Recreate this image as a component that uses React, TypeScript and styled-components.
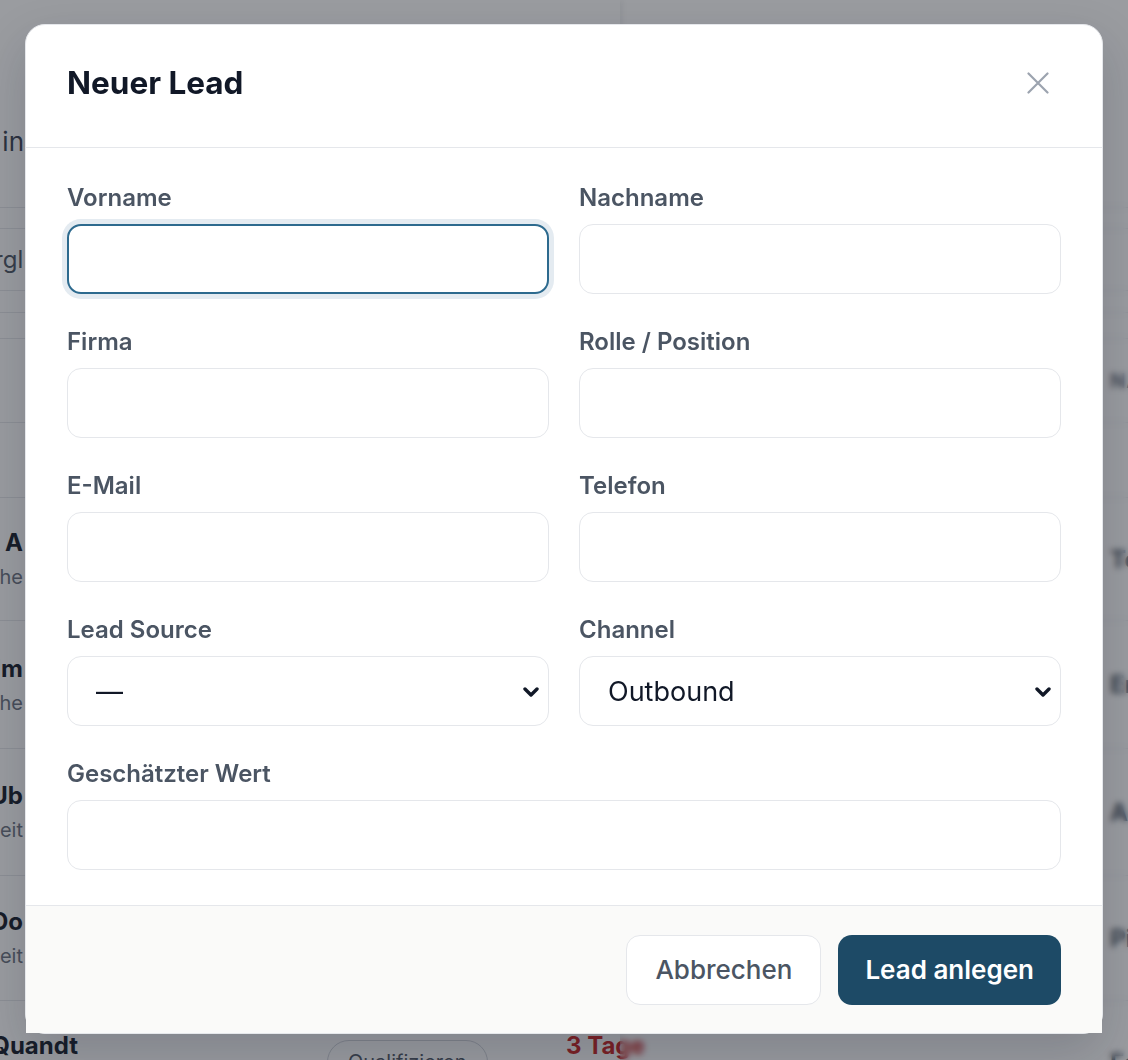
import React from "react";
import styled, { createGlobalStyle, css } from "styled-components";

const GlobalStyle = createGlobalStyle`
  * { box-sizing: border-box; }
  html, body { margin: 0; padding: 0; }
  body {
    font-family: Inter, "Noto Sans", "Liberation Sans", sans-serif;
    background: #ffffff;
    color: #111827;
    -webkit-font-smoothing: antialiased;
  }
  #root { height: 1060px; overflow: hidden; }
`;

/* ---------- page behind the dialog ---------- */

const Page = styled.div`
  height: 1060px;
  overflow: hidden;
  background: #ffffff;
`;

const Band = styled.div<{ $h: number; $top?: number }>`
  height: ${(p) => p.$h}px;
  padding-top: ${(p) => p.$top ?? 0}px;
  border-bottom: 1px solid #e5e7eb;
  display: grid;
  grid-template-columns: 78px 249px 239px 544px 1fr;
  align-items: center;
`;

// shows only the tail of a text that runs in from the left edge
const Clip = styled.div<{ $w: number; $hide?: number }>`
  width: ${(p) => p.$w}px;
  display: flex;
  flex-direction: column;
  align-items: flex-end;
  overflow: hidden;
  white-space: nowrap;
  gap: 6px;
  & > * {
    margin-right: -${(p) => p.$hide ?? 0}px;
  }
`;

const Stack = styled.div`
  display: flex;
  flex-direction: column;
  gap: 6px;
  white-space: nowrap;
`;

const PageTitle = styled.span`
  font-size: 26px;
  color: #374151;
`;

const FilterText = styled.span`
  font-size: 24px;
  color: #4b5563;
`;

const Name = styled.span`
  font-size: 24px;
  line-height: 30px;
  font-weight: 700;
  color: #111827;
`;

const Sub = styled.span`
  font-size: 20px;
  line-height: 26px;
  color: #6b7280;
`;

const HeadCell = styled.span`
  font-size: 20px;
  font-weight: 700;
  color: #6b7280;
  letter-spacing: 1px;
  white-space: nowrap;
`;

const StepCell = styled.span`
  font-size: 24px;
  font-weight: 700;
  color: #4b5563;
  white-space: nowrap;
`;

const Pill = styled.span`
  justify-self: start;
  height: 44px;
  padding: 0 20px;
  border: 1.5px solid #d1d5db;
  border-radius: 999px;
  font-size: 20px;
  color: #4b5563;
  display: flex;
  align-items: center;
`;

const Overdue = styled.span`
  font-size: 24px;
  line-height: 30px;
  font-weight: 700;
  color: #c81e1e;
`;

/* ---------- dim layer ---------- */

const Shades = styled.div`
  position: fixed;
  inset: 0;
  display: flex;
`;

const Shade = styled.div<{ $blur?: boolean }>`
  background: rgba(30, 35, 45, 0.45);
  flex: ${(p) => (p.$blur ? "1 1 auto" : "0 0 620px")};
  ${(p) =>
    p.$blur &&
    css`
      backdrop-filter: blur(3px);
    `}
`;

/* ---------- dialog ---------- */

const DialogLayer = styled.div`
  position: fixed;
  inset: 0;
  padding-bottom: 2px;
  display: flex;
  align-items: center;
  justify-content: center;
`;

const Dialog = styled.div`
  width: 1078px;
  height: 1010px;
  background: #ffffff;
  border: 1px solid #e5e7eb;
  border-radius: 20px;
  display: flex;
  flex-direction: column;
  box-shadow: 0 20px 50px rgba(15, 23, 42, 0.18);
`;

const Header = styled.div`
  height: 123px;
  flex: none;
  border-bottom: 1px solid #e5e7eb;
  padding: 0 42px 6px 41px;
  display: flex;
  align-items: center;
  justify-content: space-between;
`;

const Title = styled.h2`
  margin: 0;
  font-size: 31.5px;
  line-height: 40px;
  font-weight: 700;
  color: #111827;
`;

const CloseButton = styled.button`
  width: 44px;
  height: 44px;
  border: none;
  background: transparent;
  padding: 0;
  display: flex;
  align-items: center;
  justify-content: center;
  color: #9ca3af;
  cursor: pointer;
`;

const Body = styled.div`
  flex: 1 1 auto;
  padding: 36px 41px 0;
  display: grid;
  grid-template-columns: 1fr 1fr;
  column-gap: 30px;
  row-gap: 34px;
  align-content: start;
`;

const Field = styled.div<{ $wide?: boolean }>`
  display: flex;
  flex-direction: column;
  ${(p) =>
    p.$wide &&
    css`
      grid-column: 1 / -1;
    `}
`;

const Label = styled.label`
  font-size: 24px;
  line-height: 28px;
  font-weight: 600;
  color: #4b5563;
  margin-bottom: 12px;
`;

const controlBase = css<{ $focused?: boolean }>`
  width: 100%;
  height: 70px;
  border: 1.5px solid #e5e7eb;
  border-radius: 14px;
  background: #ffffff;
  padding: 0 28px;
  font-family: Inter, "Noto Sans", sans-serif;
  font-size: 27px;
  color: #111827;
  outline: none;
  ${(p) =>
    p.$focused &&
    css`
      border: 2px solid #2d6a8e;
      box-shadow: 0 0 0 5px #e4ebf1;
    `}
`;

const Input = styled.input<{ $focused?: boolean }>`
  ${controlBase}
`;

const SelectWrap = styled.div`
  position: relative;
`;

const Select = styled.select<{ $focused?: boolean }>`
  ${controlBase}
  appearance: none;
  -webkit-appearance: none;
`;

const Chevron = styled.svg`
  position: absolute;
  right: 10px;
  top: 31px;
  pointer-events: none;
`;

const Footer = styled.div`
  height: 128px;
  flex: none;
  border-top: 1px solid #e5e7eb;
  background: #fafaf9;
  padding: 0 41px;
  display: flex;
  align-items: center;
  justify-content: flex-end;
  gap: 17px;
`;

const Button = styled.button<{ $primary?: boolean }>`
  height: 70px;
  border-radius: 14px;
  font-family: Inter, "Noto Sans", sans-serif;
  font-size: 26px;
  cursor: pointer;
  ${(p) =>
    p.$primary
      ? css`
          padding: 0 27px;
          border: none;
          background: #1d4a66;
          color: #ffffff;
          font-weight: 600;
        `
      : css`
          padding: 0 28px;
          border: 1.5px solid #e5e7eb;
          background: #ffffff;
          color: #4b5563;
          font-weight: 500;
        `}
`;

const leads = [
  { name: "Benedikt A", sub: "Technische", step: "Telefonat", h: 123 },
  { name: "Wilhelm", sub: "Logistische", step: "Erstgespräch", h: 128 },
  { name: "Jakob Ub", sub: "Projektleit", step: "Angebot", h: 127 },
  { name: "Marie Do", sub: "Teamleit", step: "Pitch", h: 125 },
];

const ChevronDown = () => (
  <Chevron width="16" height="10" viewBox="0 0 16 10">
    <path
      d="M2 2 L8 8 L14 2"
      fill="none"
      stroke="#111827"
      strokeWidth="3.4"
      strokeLinecap="round"
      strokeLinejoin="round"
    />
  </Chevron>
);

export default function App() {
  return (
    <>
      <GlobalStyle />
      <Page>
        <Band $h={208} $top={76}>
          <Clip $w={24}>
            <PageTitle>Leads verwalten in</PageTitle>
          </Clip>
        </Band>
        <Band $h={21} />
        <Band $h={62}>
          <Clip $w={22} $hide={49}>
            <FilterText>Vergleich</FilterText>
          </Clip>
        </Band>
        <Band $h={22} />
        <Band $h={26} />
        <Band $h={84}>
          <span />
          <span />
          <span />
          <span />
          <HeadCell>NÄCHSTER SCHRITT</HeadCell>
        </Band>
        <Band $h={75} />
        {leads.map((l) => (
          <Band $h={l.h} key={l.name}>
            <Clip $w={23}>
              <Name>{l.name}</Name>
              <Sub>{l.sub}</Sub>
            </Clip>
            <span />
            <span />
            <span />
            <StepCell>{l.step}</StepCell>
          </Band>
        ))}
        <Band $h={123}>
          <Clip $w={78}>
            <Name>Lars Quandt</Name>
            <Sub>Bereichsleitung</Sub>
          </Clip>
          <span />
          <Pill>Qualifizieren</Pill>
          <Stack>
            <Overdue>3 Tage</Overdue>
            <Sub>überfällig</Sub>
          </Stack>
          <StepCell>Follow-up</StepCell>
        </Band>
      </Page>

      <Shades>
        <Shade />
        <Shade $blur />
      </Shades>

      <DialogLayer>
        <Dialog role="dialog" aria-label="Neuer Lead">
          <Header>
            <Title>Neuer Lead</Title>
            <CloseButton aria-label="Schließen">
              <svg width="22" height="22" viewBox="0 0 22 22">
                <path
                  d="M1.5 1.5 L20.5 20.5 M20.5 1.5 L1.5 20.5"
                  stroke="currentColor"
                  strokeWidth="2.2"
                  strokeLinecap="round"
                />
              </svg>
            </CloseButton>
          </Header>

          <Body>
            <Field>
              <Label>Vorname</Label>
              <Input $focused />
            </Field>
            <Field>
              <Label>Nachname</Label>
              <Input />
            </Field>
            <Field>
              <Label>Firma</Label>
              <Input />
            </Field>
            <Field>
              <Label>Rolle / Position</Label>
              <Input />
            </Field>
            <Field>
              <Label>E-Mail</Label>
              <Input type="email" />
            </Field>
            <Field>
              <Label>Telefon</Label>
              <Input type="tel" />
            </Field>
            <Field>
              <Label>Lead Source</Label>
              <SelectWrap>
                <Select defaultValue="">
                  <option value="">—</option>
                  <option value="web">Website</option>
                  <option value="ref">Empfehlung</option>
                </Select>
                <ChevronDown />
              </SelectWrap>
            </Field>
            <Field>
              <Label>Channel</Label>
              <SelectWrap>
                <Select defaultValue="outbound">
                  <option value="outbound">Outbound</option>
                  <option value="inbound">Inbound</option>
                </Select>
                <ChevronDown />
              </SelectWrap>
            </Field>
            <Field $wide>
              <Label>Geschätzter Wert</Label>
              <Input />
            </Field>
          </Body>

          <Footer>
            <Button>Abbrechen</Button>
            <Button $primary>Lead anlegen</Button>
          </Footer>
        </Dialog>
      </DialogLayer>
    </>
  );
}
